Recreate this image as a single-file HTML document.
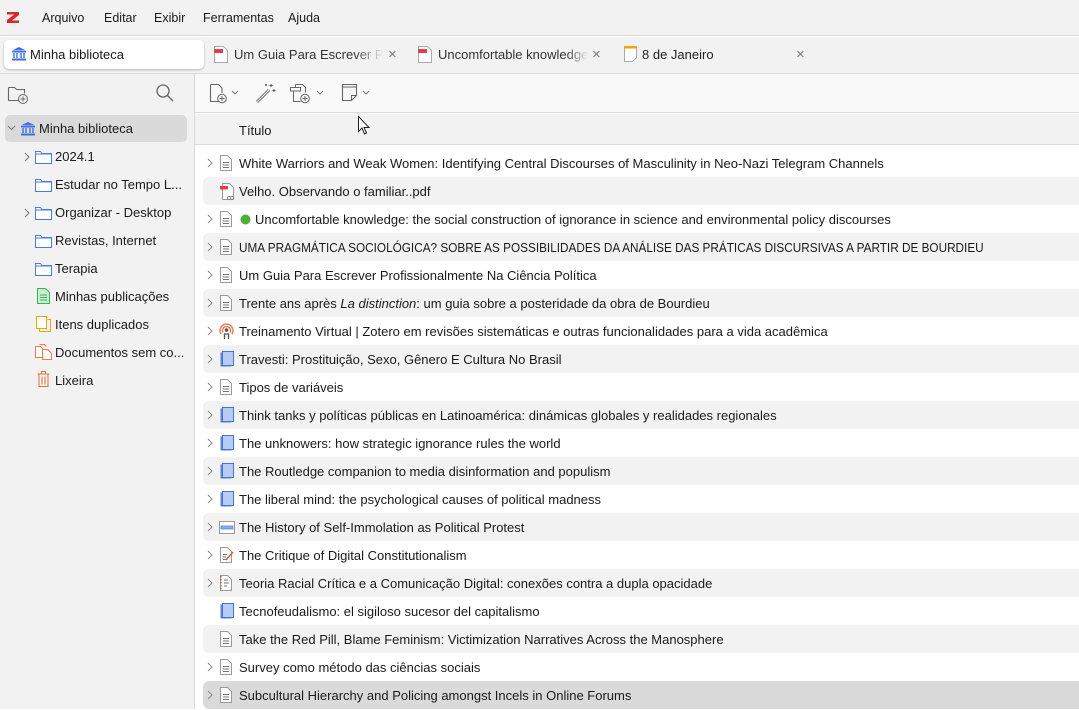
<!DOCTYPE html>
<html><head><meta charset="utf-8"><style>
*{box-sizing:border-box;margin:0;padding:0}
body{width:1079px;height:709px;overflow:hidden;background:#fff;font-family:"Segoe UI","Liberation Sans",sans-serif;font-size:13px;color:#1a1a1a;position:relative}
.a{position:absolute}
.menu span{position:absolute;top:11px;font-size:12.5px}
.tab{position:absolute;top:41px;height:27px;font-size:13px;line-height:27px;white-space:nowrap;overflow:hidden}
.side div.it{position:absolute;left:0;height:28px;line-height:28px;font-size:13px;white-space:nowrap}
.row{position:absolute;left:203px;right:0;height:28px;line-height:29px;white-space:nowrap;border-radius:6px 0 0 6px}
.row.s{background:#f2f2f2}
.row.sel{background:#dadada}
.row .t{position:absolute;left:36px;top:0}
.row svg{position:absolute}
.chev{left:4px;top:9px}
.ic{left:17px;top:6px}
</style></head><body>
<div class="a" style="left:0;top:0;width:1079px;height:36px;background:#f2f2f2;border-bottom:1px solid #d9d9d9"></div>
<div class="menu">
<svg class="a" style="left:6px;top:11px" width="14" height="13"><path d="M1 1h12v3L6 9.5h7V12H1V9l7-5.5H1z" fill="#d62a2a"/></svg>
<span style="left:42px">Arquivo</span><span style="left:104px">Editar</span><span style="left:154px">Exibir</span><span style="left:203px">Ferramentas</span><span style="left:288px">Ajuda</span>
</div>
<div class="a" style="left:0;top:37px;width:1079px;height:37px;background:#f2f2f2;border-bottom:1px solid #dcdcdc"></div>
<div class="a" style="left:4px;top:40px;width:200px;height:29px;background:#fff;border-radius:5px;box-shadow:0 1px 2px rgba(0,0,0,.25)"></div>
<svg class="a" style="left:11px;top:46px" width="16" height="15"><path d="M1 4.5L8 1l7 3.5z" fill="#3f6fe0"/><rect x="1" y="5" width="14" height="1.5" fill="#3f6fe0"/><path d="M3 7v5M6 7v5M10 7v5M13 7v5" stroke="#3f6fe0" stroke-width="1.4"/><rect x="1" y="12.5" width="14" height="2" fill="#3f6fe0"/></svg>
<div class="tab" style="left:30px;width:170px">Minha biblioteca</div>
<svg class="a" style="left:214px;top:46px" width="14" height="17"><path d="M.5.5h9l4 4v12H.5z" fill="#fff" stroke="#aaa"/><rect x="0" y="3" width="9" height="4" fill="#e0414f"/></svg>
<div class="tab" style="left:234px;width:150px;color:#333;-webkit-mask-image:linear-gradient(90deg,#000 80%,transparent)">Um Guia Para Escrever Profissionalmente</div>
<div class="tab" style="left:388px;color:#777;font-size:15px">×</div>
<svg class="a" style="left:418px;top:46px" width="14" height="17"><path d="M.5.5h9l4 4v12H.5z" fill="#fff" stroke="#aaa"/><rect x="0" y="3" width="9" height="4" fill="#e0414f"/></svg>
<div class="tab" style="left:438px;width:150px;color:#333;-webkit-mask-image:linear-gradient(90deg,#000 85%,transparent)">Uncomfortable knowledge</div>
<div class="tab" style="left:592px;color:#777;font-size:15px">×</div>
<svg class="a" style="left:624px;top:46px" width="13" height="16"><path d="M.5.5h12v11l-4 4H.5z" fill="#fff" stroke="#aaa"/><rect x="0" y="0" width="13" height="2.5" fill="#f0a30a"/></svg>
<div class="tab" style="left:642px;color:#222">8 de Janeiro</div>
<div class="tab" style="left:796px;color:#777;font-size:15px">×</div>

<div class="a side" style="left:0;top:74px;width:195px;height:635px;background:#f2f2f2;border-right:1px solid #d9d9d9">
<svg class="a" style="left:7px;top:10px" width="22" height="21"><path d="M1.5 3.5h6l2 2h8v4M1.5 3.5v13h10" fill="none" stroke="#666" stroke-width="1.1"/><circle cx="16" cy="15" r="4.5" fill="#f2f2f2" stroke="#666"/><path d="M16 12.5v5M13.5 15h5" stroke="#666"/></svg>
<svg class="a" style="left:155px;top:9px" width="20" height="20"><circle cx="8" cy="8" r="6" fill="none" stroke="#666" stroke-width="1.3"/><path d="M12.5 12.5L18 18" stroke="#666" stroke-width="1.4"/></svg>
<div class="a" style="left:5px;top:41px;width:182px;height:27px;background:#dadada;border-radius:5px"></div>
<svg class="a" style="left:7px;top:51px" width="9" height="6"><path d="M1 1l3.5 3.5L8 1" fill="none" stroke="#777"/></svg>
<svg class="a" style="left:20px;top:47px" width="16" height="15"><path d="M1 4.5L8 1l7 3.5z" fill="#3f6fe0"/><rect x="1" y="5" width="14" height="1.5" fill="#3f6fe0"/><path d="M3 7v5M6 7v5M10 7v5M13 7v5" stroke="#3f6fe0" stroke-width="1.4"/><rect x="1" y="12.5" width="14" height="2" fill="#3f6fe0"/></svg>
<div class="it" style="left:39px;top:41px">Minha biblioteca</div>
</div>
<div class="a side" style="left:0;top:143px;width:194px">
<svg class="a" style="left:24px;top:9px" width="6" height="10"><path d="M1 1l4 4-4 4" fill="none" stroke="#777"/></svg>
<svg class="a" style="left:35px;top:7px" width="17" height="14"><path d="M.5 1.5h5l1.5 2h9.5v10H.5z" fill="#fff" stroke="#4a7be0"/><path d="M.5 4h16" stroke="#4a7be0"/></svg>
<div class="it" style="left:55px;top:0">2024.1</div>
<svg class="a" style="left:35px;top:35px" width="17" height="14"><path d="M.5 1.5h5l1.5 2h9.5v10H.5z" fill="#fff" stroke="#4a7be0"/><path d="M.5 4h16" stroke="#4a7be0"/></svg>
<div class="it" style="left:55px;top:28px">Estudar no Tempo L...</div>
<svg class="a" style="left:24px;top:65px" width="6" height="10"><path d="M1 1l4 4-4 4" fill="none" stroke="#777"/></svg>
<svg class="a" style="left:35px;top:63px" width="17" height="14"><path d="M.5 1.5h5l1.5 2h9.5v10H.5z" fill="#fff" stroke="#4a7be0"/><path d="M.5 4h16" stroke="#4a7be0"/></svg>
<div class="it" style="left:55px;top:56px">Organizar - Desktop</div>
<svg class="a" style="left:35px;top:91px" width="17" height="14"><path d="M.5 1.5h5l1.5 2h9.5v10H.5z" fill="#fff" stroke="#4a7be0"/><path d="M.5 4h16" stroke="#4a7be0"/></svg>
<div class="it" style="left:55px;top:84px">Revistas, Internet</div>
<svg class="a" style="left:35px;top:119px" width="17" height="14"><path d="M.5 1.5h5l1.5 2h9.5v10H.5z" fill="#fff" stroke="#4a7be0"/><path d="M.5 4h16" stroke="#4a7be0"/></svg>
<div class="it" style="left:55px;top:112px">Terapia</div>
<svg class="a" style="left:37px;top:145px" width="13" height="16"><path d="M.5.5h8l4 4v11H.5z" fill="#c9efd2" stroke="#3cb35a"/><path d="M3 7h7M3 9.5h7M3 12h7" stroke="#3cb35a"/></svg>
<div class="it" style="left:55px;top:140px">Minhas publicações</div>
<svg class="a" style="left:36px;top:173px" width="15" height="16"><rect x=".5" y=".5" width="10" height="12" fill="#fff" stroke="#f0a30a"/><path d="M3.5 12.5v3h11v-12h-3" fill="none" stroke="#f0a30a"/></svg>
<div class="it" style="left:55px;top:168px">Itens duplicados</div>
<svg class="a" style="left:35px;top:201px" width="17" height="16"><path d="M.5 2.5h5l2 2v9H.5z" fill="#fff" stroke="#f07a4a"/><path d="M4.5.5h5l2 2M7.5 5.5h5l4 4v6h-9z" fill="#fff" stroke="#f07a4a"/></svg>
<div class="it" style="left:55px;top:196px">Documentos sem co...</div>
<svg class="a" style="left:37px;top:228px" width="13" height="16"><path d="M.5 3h12M4.5 3V.5h4V3M2 3.5v12h9v-12M5 5.5v8M8 5.5v8" fill="none" stroke="#e0703a"/></svg>
<div class="it" style="left:55px;top:224px">Lixeira</div>
</div>

<div class="a" style="left:195px;top:74px;width:884px;height:39px;background:#f9f9f9;border-bottom:1px solid #dcdcdc"></div>
<svg class="a" style="left:209px;top:83px" width="32" height="21"><path d="M1.5 1.5h8l3.5 3.5v5M1.5 1.5v17h8" fill="none" stroke="#666" stroke-width="1.1"/><circle cx="13" cy="15.5" r="4.3" fill="#f9f9f9" stroke="#666"/><path d="M13 13v5M10.5 15.5h5" stroke="#666"/><path d="M23 8l3 3 3-3" fill="none" stroke="#777"/></svg>
<svg class="a" style="left:255px;top:82px" width="22" height="22"><path d="M2 20L14 8" stroke="#666" stroke-width="3"/><path d="M2 20L14 8" stroke="#f9f9f9" stroke-width="1"/><path d="M16 2v3M14.5 3.5h3M19 7v3M17.5 8.5h3M11 2v2M10 3h2" stroke="#555"/></svg>
<svg class="a" style="left:290px;top:83px" width="36" height="21"><path d="M5.5 1.5h7l3 3v5M5.5 1.5v3" fill="none" stroke="#666"/><rect x=".5" y="4.5" width="10" height="3.5" fill="#f9f9f9" stroke="#666"/><path d="M3.5 8v10.5h7" fill="none" stroke="#666"/><circle cx="15" cy="15.5" r="4.3" fill="#f9f9f9" stroke="#666"/><path d="M15 13v5M12.5 15.5h5" stroke="#666"/><path d="M27 8l3 3 3-3" fill="none" stroke="#777"/></svg>
<svg class="a" style="left:341px;top:83px" width="32" height="20"><path d="M1.5 1.5h14v11l-5 5h-9z" fill="none" stroke="#666" stroke-width="1.1"/><path d="M1.5 4h14M10.5 17.5v-5h5" fill="none" stroke="#666"/><path d="M22 8l3 3 3-3" fill="none" stroke="#777"/></svg>
<div class="a" style="left:195px;top:114px;width:884px;height:31px;background:#f2f2f2;border-bottom:1px solid #dcdcdc"></div>
<div class="a" style="left:239px;top:123px;font-size:13px">Título</div>
<svg class="a" style="left:357px;top:115px" width="14" height="21"><path d="M1.5 1.5v15l3.5-3.5 2.5 6 2-1-2.5-5.5h5z" fill="#fff" stroke="#222" stroke-width="1"/></svg>

<div class="a" style="left:0;top:149px;width:1079px">
<div class="row" style="top:0"><svg class="chev" width="6" height="10"><path d="M1 1l4 4-4 4" fill="none" stroke="#888"/></svg><svg class="ic" width="12" height="16"><path d="M.5.5h7l4 4v11H.5z" fill="#fff" stroke="#999"/><path d="M3 7.5h6M3 10h6M3 12.5h6" stroke="#777"/></svg><span class="t">White Warriors and Weak Women: Identifying Central Discourses of Masculinity in Neo-Nazi Telegram Channels</span></div>
<div class="row s" style="top:28px"><svg class="ic" width="15" height="18"><path d="M2.5.5h7l4 4v12h-11z" fill="#fff" stroke="#999"/><rect x="0" y="3" width="8" height="3.5" fill="#e0414f"/><circle cx="9" cy="15" r="1.6" fill="none" stroke="#888"/><circle cx="12" cy="15" r="1.6" fill="none" stroke="#888"/></svg><span class="t">Velho. Observando o familiar..pdf</span></div>
<div class="row" style="top:56px"><svg class="chev" width="6" height="10"><path d="M1 1l4 4-4 4" fill="none" stroke="#888"/></svg><svg class="ic" width="12" height="16"><path d="M.5.5h7l4 4v11H.5z" fill="#fff" stroke="#999"/><path d="M3 7.5h6M3 10h6M3 12.5h6" stroke="#777"/></svg><svg style="left:37px;top:9px" width="11" height="11"><circle cx="5.5" cy="5.5" r="5" fill="#4caf3a"/></svg><span class="t" style="left:52px">Uncomfortable knowledge: the social construction of ignorance in science and environmental policy discourses</span></div>
<div class="row s" style="top:84px"><svg class="chev" width="6" height="10"><path d="M1 1l4 4-4 4" fill="none" stroke="#888"/></svg><svg class="ic" width="12" height="16"><path d="M.5.5h7l4 4v11H.5z" fill="#fff" stroke="#999"/><path d="M3 7.5h6M3 10h6M3 12.5h6" stroke="#777"/></svg><span class="t" style="transform:scaleX(.905);transform-origin:0 0">UMA PRAGMÁTICA SOCIOLÓGICA? SOBRE AS POSSIBILIDADES DA ANÁLISE DAS PRÁTICAS DISCURSIVAS A PARTIR DE BOURDIEU</span></div>
<div class="row" style="top:112px"><svg class="chev" width="6" height="10"><path d="M1 1l4 4-4 4" fill="none" stroke="#888"/></svg><svg class="ic" width="12" height="16"><path d="M.5.5h7l4 4v11H.5z" fill="#fff" stroke="#999"/><path d="M3 7.5h6M3 10h6M3 12.5h6" stroke="#777"/></svg><span class="t">Um Guia Para Escrever Profissionalmente Na Ciência Política</span></div>
<div class="row s" style="top:140px"><svg class="chev" width="6" height="10"><path d="M1 1l4 4-4 4" fill="none" stroke="#888"/></svg><svg class="ic" width="12" height="16"><path d="M.5.5h7l4 4v11H.5z" fill="#fff" stroke="#999"/><path d="M3 7.5h6M3 10h6M3 12.5h6" stroke="#777"/></svg><span class="t">Trente ans après <i>La distinction</i>: um guia sobre a posteridade da obra de Bourdieu</span></div>
<div class="row" style="top:168px"><svg class="chev" width="6" height="10"><path d="M1 1l4 4-4 4" fill="none" stroke="#888"/></svg><svg class="ic" style="left:15px;top:5px" width="17" height="18"><path d="M3 12a6.5 6.5 0 1 1 11 0M5 10.5a4 4 0 1 1 7 0" fill="none" stroke="#f07a4a" stroke-width="1.4"/><circle cx="8.5" cy="8" r="1.8" fill="#555"/><path d="M6.5 17v-5h4v5" fill="none" stroke="#555" stroke-width="1.3"/></svg><span class="t">Treinamento Virtual | Zotero em revisões sistemáticas e outras funcionalidades para a vida acadêmica</span></div>
<div class="row s" style="top:196px"><svg class="chev" width="6" height="10"><path d="M1 1l4 4-4 4" fill="none" stroke="#888"/></svg><svg class="ic" width="14" height="16"><rect x=".5" y="1.5" width="11" height="14" fill="#5b85e0"/><rect x="2.5" y=".5" width="11" height="14" fill="#b7cdf3" stroke="#4a72d8"/></svg><span class="t">Travesti: Prostituição, Sexo, Gênero E Cultura No Brasil</span></div>
<div class="row" style="top:224px"><svg class="chev" width="6" height="10"><path d="M1 1l4 4-4 4" fill="none" stroke="#888"/></svg><svg class="ic" width="12" height="16"><path d="M.5.5h7l4 4v11H.5z" fill="#fff" stroke="#999"/><path d="M3 7.5h6M3 10h6M3 12.5h6" stroke="#777"/></svg><span class="t">Tipos de variáveis</span></div>
<div class="row s" style="top:252px"><svg class="chev" width="6" height="10"><path d="M1 1l4 4-4 4" fill="none" stroke="#888"/></svg><svg class="ic" width="14" height="16"><rect x=".5" y="1.5" width="11" height="14" fill="#5b85e0"/><rect x="2.5" y=".5" width="11" height="14" fill="#b7cdf3" stroke="#4a72d8"/></svg><span class="t">Think tanks y políticas públicas en Latinoamérica: dinámicas globales y realidades regionales</span></div>
<div class="row" style="top:280px"><svg class="chev" width="6" height="10"><path d="M1 1l4 4-4 4" fill="none" stroke="#888"/></svg><svg class="ic" width="14" height="16"><rect x=".5" y="1.5" width="11" height="14" fill="#5b85e0"/><rect x="2.5" y=".5" width="11" height="14" fill="#b7cdf3" stroke="#4a72d8"/></svg><span class="t">The unknowers: how strategic ignorance rules the world</span></div>
<div class="row s" style="top:308px"><svg class="chev" width="6" height="10"><path d="M1 1l4 4-4 4" fill="none" stroke="#888"/></svg><svg class="ic" width="14" height="16"><rect x=".5" y="1.5" width="11" height="14" fill="#5b85e0"/><rect x="2.5" y=".5" width="11" height="14" fill="#b7cdf3" stroke="#4a72d8"/></svg><span class="t">The Routledge companion to media disinformation and populism</span></div>
<div class="row" style="top:336px"><svg class="chev" width="6" height="10"><path d="M1 1l4 4-4 4" fill="none" stroke="#888"/></svg><svg class="ic" width="14" height="16"><rect x=".5" y="1.5" width="11" height="14" fill="#5b85e0"/><rect x="2.5" y=".5" width="11" height="14" fill="#b7cdf3" stroke="#4a72d8"/></svg><span class="t">The liberal mind: the psychological causes of political madness</span></div>
<div class="row s" style="top:364px"><svg class="chev" width="6" height="10"><path d="M1 1l4 4-4 4" fill="none" stroke="#888"/></svg><svg class="ic" style="left:16px;top:8px" width="16" height="13"><rect x=".5" y=".5" width="15" height="12" fill="#fff" stroke="#999"/><rect x="2" y="5" width="12" height="3" fill="#8fb0ee" stroke="#4a72d8" stroke-width=".7"/></svg><span class="t">The History of Self-Immolation as Political Protest</span></div>
<div class="row" style="top:392px"><svg class="chev" width="6" height="10"><path d="M1 1l4 4-4 4" fill="none" stroke="#888"/></svg><svg class="ic" width="14" height="16"><path d="M.5.5h7l4 4v11H.5z" fill="#fff" stroke="#999"/><path d="M3 7.5h4M3 10h3M3 12.5h3" stroke="#777"/><path d="M6 13L13 5" stroke="#e0603a" stroke-width="1.6"/></svg><span class="t">The Critique of Digital Constitutionalism</span></div>
<div class="row s" style="top:420px"><svg class="chev" width="6" height="10"><path d="M1 1l4 4-4 4" fill="none" stroke="#888"/></svg><svg class="ic" width="13" height="16"><path d="M.5.5h7l4 4v11H.5z" fill="#fff" stroke="#999"/><path d="M1 1v14" stroke="#d33" stroke-dasharray="1.5 1.5"/><path d="M4 5h4M4 8h5M4 11h3" stroke="#777"/></svg><span class="t">Teoria Racial Crítica e a Comunicação Digital: conexões contra a dupla opacidade</span></div>
<div class="row" style="top:448px"><svg class="ic" width="14" height="16"><rect x=".5" y="1.5" width="11" height="14" fill="#5b85e0"/><rect x="2.5" y=".5" width="11" height="14" fill="#b7cdf3" stroke="#4a72d8"/></svg><span class="t">Tecnofeudalismo: el sigiloso sucesor del capitalismo</span></div>
<div class="row s" style="top:476px"><svg class="ic" width="12" height="16"><path d="M.5.5h7l4 4v11H.5z" fill="#fff" stroke="#999"/><path d="M3 7.5h6M3 10h6M3 12.5h6" stroke="#777"/></svg><span class="t">Take the Red Pill, Blame Feminism: Victimization Narratives Across the Manosphere</span></div>
<div class="row" style="top:504px"><svg class="chev" width="6" height="10"><path d="M1 1l4 4-4 4" fill="none" stroke="#888"/></svg><svg class="ic" width="12" height="16"><path d="M.5.5h7l4 4v11H.5z" fill="#fff" stroke="#999"/><path d="M3 7.5h6M3 10h6M3 12.5h6" stroke="#777"/></svg><span class="t">Survey como método das ciências sociais</span></div>
<div class="row sel" style="top:532px"><svg class="chev" width="6" height="10"><path d="M1 1l4 4-4 4" fill="none" stroke="#888"/></svg><svg class="ic" width="12" height="16"><path d="M.5.5h7l4 4v11H.5z" fill="#fff" stroke="#999"/><path d="M3 7.5h6M3 10h6M3 12.5h6" stroke="#777"/></svg><span class="t">Subcultural Hierarchy and Policing amongst Incels in Online Forums</span></div>
</div>
</body></html>
